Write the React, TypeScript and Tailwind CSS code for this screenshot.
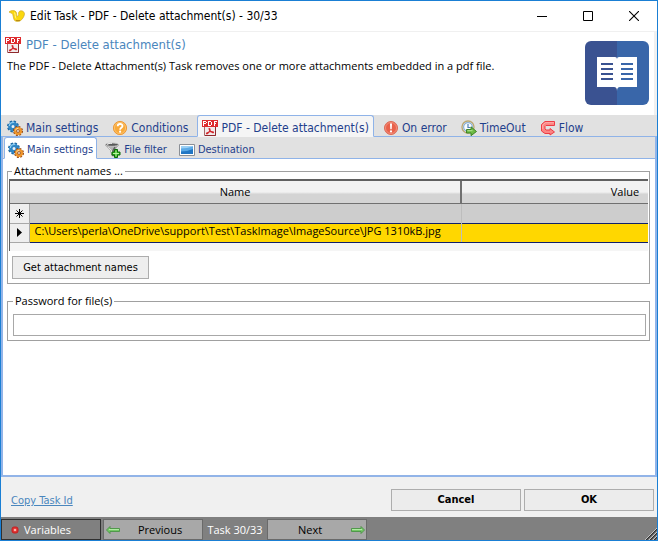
import { useState } from 'react';
import type { ReactNode } from 'react';

interface TabItem {
  id: string;
  label: string;
  icon: ReactNode;
}

function LogoIcon() {
  return (
    <svg width="16" height="12" viewBox="0 0 16 12" className="shrink-0">
      <path
        d="M0 2C2 .3 5.500 0 7 1.800c1 1.500.5 3.500 1 4.700C9.300 6 10 5 9.500 3.500 9.500 2 10.500.8 12 .8c2 0 3 1 3.500 3-.3 3-2 5.500-4.500 7.200-1.500.6-3.500.6-4.800 0C4.300 9.500 4.500 6.500 3.700 4.200 3 2.800 1.500 3 0 2z"
        fill="#fbd80e"
        stroke="#cfa62a"
        strokeWidth=".7"
      />
      <path d="M5.500 2.500c1 2 .5 4.500 1.500 6" fill="none" stroke="#fff48a" />
      <path d="M7 10.500h4" stroke="#b98d12" />
    </svg>
  );
}

function PdfIcon() {
  return (
    <svg width="16" height="16" viewBox="0 0 16 16" className="shrink-0">
      <path d="M2.500 5.500h11v10h-11z" fill="#f1ecec" stroke="#a9686a" />
      <path d="M3 15.500h10.500V7" fill="none" stroke="#8f2a2d" />
      <path
        d="M7.200 8.500c1.300 0 .8 2-.2 3.500S5 14.300 4.500 13.700s1.500-1.500 3.500-1.900 3.800 0 3.500.7-2-.2-3-1.500-2-2.500-1.300-2.500z"
        fill="none"
        stroke="#d3282d"
        strokeWidth="1.100"
      />
      <path d="M0 0h16v7H0z" fill="#de2b2e" />
      <path
        d="M1.500 6V1M2 1.500h2M4.500 2v1M2 3.500h2M6.500 6V1M7 1.500h2M7 5.500h2M9.500 2v3M12.500 6V1M13 1.500h2M13 3.500h1"
        fill="none"
        stroke="#fff"
        shapeRendering="crispEdges"
      />
    </svg>
  );
}

function GearsIcon() {
  return (
    <svg width="16" height="16" viewBox="0 0 16 16" className="shrink-0">
      <circle cx="6" cy="6.500" r="5" fill="none" stroke="#1d659f" strokeWidth="2" strokeDasharray="2.300 1.627" />
      <circle cx="6" cy="6.500" r="3.200" fill="#eef3f8" stroke="#2f86c5" strokeWidth="3.400" />
      <path d="M2.300 6a3.800 3.800 0 0 1 5-3.500" fill="none" stroke="#8ccbf0" strokeWidth="1.300" />
      <circle cx="11" cy="11" r="4" fill="none" stroke="#93440f" strokeWidth="2" strokeDasharray="1.800 1.340" />
      <circle cx="11" cy="11" r="2.600" fill="#fff" stroke="#ee952b" strokeWidth="2.800" />
      <path d="M8.500 10.500a2.700 2.700 0 0 1 3-2.200" fill="none" stroke="#ffd894" />
      <circle cx="11" cy="11" r="1.400" fill="#fff" stroke="#8e4312" strokeWidth=".8" />
    </svg>
  );
}

function QuestionIcon() {
  return (
    <svg width="16" height="16" viewBox="0 0 16 16" className="shrink-0">
      <circle cx="8" cy="8" r="6.600" fill="#f8a93a" stroke="#ee9a38" />
      <circle cx="8" cy="8" r="5.600" fill="none" stroke="#fbc878" strokeWidth=".8" />
      <path d="M5.700 6.300C5.700 3.300 10.500 3.300 10.500 6c0 1.900-2.400 1.700-2.400 3.700" fill="none" stroke="#fff" strokeWidth="1.800" />
      <circle cx="8.100" cy="11.700" r="1.100" fill="#fff" />
    </svg>
  );
}

function ErrorIcon() {
  return (
    <svg width="16" height="16" viewBox="0 0 16 16" className="shrink-0">
      <circle cx="8" cy="8" r="6.500" fill="#e9614b" stroke="#dd6a56" />
      <circle cx="8" cy="8" r="5.500" fill="none" stroke="#f39a86" strokeWidth=".8" />
      <path d="M7 3.500h2L8.700 9.200H7.300z" fill="#fff" />
      <circle cx="8" cy="11.400" r="1.100" fill="#fff" />
    </svg>
  );
}

function TimeOutIcon() {
  return (
    <svg width="16" height="16" viewBox="0 0 16 16" className="shrink-0">
      <circle cx="7" cy="7" r="6" fill="#eef3f8" stroke="#bba873" strokeWidth="1.400" />
      <circle cx="7" cy="7" r="4.400" fill="#f7fbff" stroke="#88aed4" strokeWidth="1.200" />
      <path d="M7 4v3.500h2.500" fill="none" stroke="#4f7fb3" strokeWidth="1.200" />
      <path d="M5.500 9.500h4.500V6.800l5.500 4.700-5.500 4.200v-2.700H5.500z" fill="#6dbb45" stroke="#347d1d" strokeWidth=".9" />
      <path d="M6.500 10.700h5" stroke="#b4e58f" />
    </svg>
  );
}

function FlowIcon() {
  return (
    <svg width="16" height="16" viewBox="0 0 16 16" className="shrink-0">
      <path
        d="M14.500 1.500H5L1.500 4.500v6.500L5 13.500h5V15l4.500-3-4.500-3.500V10H6L5 9V6.500L6 5.500h8.500z"
        fill="#fb8583"
        stroke="#ee3b44"
        strokeLinejoin="round"
      />
      <path d="M14 2.700H5.500L2.700 5v4" fill="none" stroke="#ffb9b4" strokeWidth=".8" />
    </svg>
  );
}

function FilterIcon() {
  return (
    <svg width="16" height="16" viewBox="0 0 16 16" className="shrink-0">
      <path d="M.5 3l5 5.500 1.500 5.500h2V8.500l4.500-5.500z" fill="#b4b4b4" stroke="#8a8a8a" strokeWidth=".6" />
      <path d="M10 5L8 8.500V14" fill="none" stroke="#5c5c5c" strokeWidth="1.400" />
      <path d="M3 5.200l3.500 3.500L7.500 13" fill="none" stroke="#efefef" />
      <ellipse cx="7" cy="2.600" rx="6.500" ry="1.700" fill="#595959" stroke="#c9c9c9" strokeWidth=".9" />
      <path d="M2 2.600c1-1 3-1.300 5-1.300" fill="none" stroke="#f4f4f4" />
      <path d="M9.500 7.500h3v2.500H15v3h-2.500v2.500h-3V13H7v-3h2.500z" fill="#32b51f" stroke="#0b6b08" />
      <path d="M11 8.500v6M8 11.500h6" stroke="#b8f2a0" />
    </svg>
  );
}

function DestinationIcon() {
  return (
    <svg width="16" height="16" viewBox="0 0 16 16" className="shrink-0">
      <path d="M.5 2.500h15v11H.5z" fill="#fff" stroke="#8a8f96" />
      <path d="M2 4h12v8H2z" fill="#2176c4" />
      <path d="M2 9.500Q8 9.500 14 7V4H2z" fill="#5aa9e6" />
      <path d="M2 6.500Q8 6.500 14 4.500V4H2z" fill="#9bd0f5" />
    </svg>
  );
}

function BookIcon() {
  return (
    <svg width="64" height="64" viewBox="0 0 64 64" className="shrink-0">
      <path d="M6 0h26v64H6a6 6 0 0 1-6-6V6a6 6 0 0 1 6-6z" fill="#3a5291" />
      <path d="M32 0h26a6 6 0 0 1 6 6v52a6 6 0 0 1-6 6H32z" fill="#3966a9" />
      <path d="M12 16h18q2 0 2 2 0-2 2-2h18v30H35q-3 0-3 4 0-4-3-4H12z" fill="#fff" />
      <path d="M16 23h12M16 28h12M16 33h12M16 38h12" stroke="#3a5291" strokeWidth="2" />
      <path d="M36 23h12M36 28h12M36 33h12M36 38h12" stroke="#3966a9" strokeWidth="2" />
    </svg>
  );
}

function ArrowIcon({ flipped = false }: { flipped?: boolean }) {
  return (
    <svg width="14" height="8" viewBox="0 0 14 8" className={flipped ? 'shrink-0 -scale-x-100' : 'shrink-0'}>
      <path d="M.5 2.500h9.500v-2l3.500 3.500-3.500 3.500v-2H.5z" fill="#74c766" stroke="#4b9445" strokeWidth=".9" />
      <path d="M1 3.500h10" stroke="#b7efa9" strokeWidth=".9" />
    </svg>
  );
}

const mainTabs: TabItem[] = [
  { id: 'main', label: 'Main settings', icon: <GearsIcon /> },
  { id: 'conditions', label: 'Conditions', icon: <QuestionIcon /> },
  { id: 'task', label: 'PDF - Delete attachment(s)', icon: <PdfIcon /> },
  { id: 'error', label: 'On error', icon: <ErrorIcon /> },
  { id: 'timeout', label: 'TimeOut', icon: <TimeOutIcon /> },
  { id: 'flow', label: 'Flow', icon: <FlowIcon /> },
];

const subTabs: TabItem[] = [
  { id: 'settings', label: 'Main settings', icon: <GearsIcon /> },
  { id: 'filter', label: 'File filter', icon: <FilterIcon /> },
  { id: 'destination', label: 'Destination', icon: <DestinationIcon /> },
];

function TitleBar() {
  return (
    <header className="flex h-[31px] items-center border-b border-[#f0f0f0] pl-2">
      <LogoIcon />
      <h1 className="ml-[5px] flex-1 font-['DejaVu_Sans_Condensed','Noto_Sans',sans-serif] text-[12px]">
        Edit Task - PDF - Delete attachment(s) - 30/33
      </h1>
      <button aria-label="Minimize" className="flex h-full w-[46px] items-center justify-center">
        <svg width="10" height="10" viewBox="0 0 10 10">
          <path d="M0 5.500h10" stroke="#000" />
        </svg>
      </button>
      <button aria-label="Maximize" className="flex h-full w-[46px] items-center justify-center">
        <svg width="10" height="10" viewBox="0 0 10 10">
          <path d="M.5.5h9v9h-9z" fill="none" stroke="#000" />
        </svg>
      </button>
      <button aria-label="Close" className="flex h-full w-[46px] items-center justify-center">
        <svg width="10" height="10" viewBox="0 0 10 10">
          <path d="M0 0l10 10M10 0L0 10" stroke="#000" strokeWidth="1.100" />
        </svg>
      </button>
    </header>
  );
}

function MainTabs({ active, onChange }: { active: string; onChange: (id: string) => void }) {
  return (
    <div
      role="tablist"
      className="flex h-[22px] gap-1 border-b border-[#8fb3e8] bg-[#e1e1e1] pl-px font-['DejaVu_Sans_Condensed','Noto_Sans',sans-serif] text-[12px] text-[#1f3f8c]"
    >
      {mainTabs.map((tab) => (
        <button
          key={tab.id}
          role="tab"
          aria-selected={tab.id === active}
          onClick={() => onChange(tab.id)}
          className={`flex h-[22px] items-center gap-[3px] whitespace-nowrap rounded-t-[3px] border px-1 pt-[3px] ${
            tab.id === active ? 'border-[#8fb3e8] border-b-[#f5f5f5] bg-[#f5f5f5]' : 'border-transparent'
          }`}
        >
          {tab.icon}
          <span>{tab.label}</span>
        </button>
      ))}
    </div>
  );
}

function SubTabs({ active, onChange }: { active: string; onChange: (id: string) => void }) {
  return (
    <div
      role="tablist"
      className="flex h-[22px] gap-1 border-b border-[#8fb3e8] bg-[#e1e1e1] pl-px font-['DejaVu_Sans_Condensed','Noto_Sans',sans-serif] text-[11px] text-[#1f3f8c]"
    >
      {subTabs.map((tab) => (
        <button
          key={tab.id}
          role="tab"
          aria-selected={tab.id === active}
          onClick={() => onChange(tab.id)}
          className={`flex h-[22px] items-center gap-[3px] whitespace-nowrap rounded-t-[3px] border px-[3px] pt-[3px] ${
            tab.id === active ? 'border-[#8fb3e8] border-b-white bg-white' : 'border-transparent'
          }`}
        >
          {tab.icon}
          <span>{tab.label}</span>
        </button>
      ))}
    </div>
  );
}

function AttachmentTable() {
  return (
    <div className="mx-px h-[72px] overflow-hidden border-t-2 border-l border-[#606060] bg-[#f5f5f5]">
      <table className="w-[778px] table-fixed border-collapse">
        <colgroup>
          <col className="w-[19px]" />
          <col className="w-[432px]" />
          <col />
        </colgroup>
        <thead>
          <tr className="h-[22px] bg-linear-to-b from-[#f2f2f2] from-50% to-[#d4d4d4] to-60%">
            <th colSpan={2} className="border-r-2 border-b border-[#707070] font-normal">Name</th>
            <th className="border-b border-[#707070] font-normal">Value</th>
          </tr>
        </thead>
        <tbody>
          <tr className="h-[20px] bg-[#cdcdcd]">
            <td className="border-r border-b border-[#a8a8a8] bg-[#eeeeee]">
              <svg width="9" height="9" viewBox="0 0 9 9" className="mx-auto">
                <path d="M4.500 0v9M0 4.500h9M1.500 1.500l6 6M7.500 1.500l-6 6" stroke="#000" />
              </svg>
            </td>
            <td className="border-r border-[#bdbdbd]" />
            <td />
          </tr>
          <tr className="h-[19px] bg-[#ffd700]">
            <td className="border-r border-b border-[#a8a8a8] bg-[#eeeeee]">
              <svg width="5" height="9" viewBox="0 0 5 9" className="mx-auto">
                <path d="M0 0l5 4.500L0 9z" fill="#000" />
              </svg>
            </td>
            <td className="truncate border border-[#10206a] border-r-[#bdbdbd] pl-[5px] align-top leading-[14px]">
              C:\Users\perla\OneDrive\support\Test\TaskImage\ImageSource\JPG 1310kB.jpg
            </td>
            <td className="border-y border-[#10206a]" />
          </tr>
        </tbody>
      </table>
    </div>
  );
}

export default function App() {
  const [mainTab, setMainTab] = useState('task');
  const [subTab, setSubTab] = useState('settings');
  const [password, setPassword] = useState('');

  return (
    <div className="flex min-h-screen flex-col border border-[#1a7fd4] bg-white font-['Open_Sans','Noto_Sans',sans-serif] text-[11px] leading-4 text-black">
      <TitleBar />

      <section className="flex h-[83px] justify-between border-r-[3px] border-[#f0f0f0] pr-[5px]">
        <div className="pt-[5px] pl-1">
          <h2 className="flex items-center gap-[5px] font-['DejaVu_Sans_Condensed','Noto_Sans',sans-serif] text-[13px] text-[#4a86bd]">
            <PdfIcon />
            PDF - Delete attachment(s)
          </h2>
          <p className="mt-[5px] pl-[2px]">
            The PDF - Delete Attachment(s) Task removes one or more attachments embedded in a pdf file.
          </p>
        </div>
        <div className="pt-[9px]">
          <BookIcon />
        </div>
      </section>

      <MainTabs active={mainTab} onChange={setMainTab} />

      <main className="flex-1 border-x-2 border-b-2 border-[#92b4e8]">
        <SubTabs active={subTab} onChange={setSubTab} />

        <div className="pt-1 pr-[5px] pl-1">
          <fieldset className="min-w-0 border border-[#a0a0a0] pb-1">
            <legend className="ml-1 px-[2px]">Attachment names ...</legend>
            <AttachmentTable />
            <button className="mt-[5px] ml-1 h-[23px] w-[137px] border border-[#adadad] bg-[#eeeeee] font-['DejaVu_Sans_Condensed','Noto_Sans',sans-serif]">
              Get attachment names
            </button>
          </fieldset>

          <fieldset className="mt-[9px] min-w-0 border border-[#a0a0a0] pr-[3px] pb-1 pl-[5px]">
            <legend className="px-[2px]">
              <label htmlFor="password">Password for file(s)</label>
            </legend>
            <input
              id="password"
              type="password"
              value={password}
              onChange={(e) => setPassword(e.target.value)}
              className="mt-[5px] block h-[22px] w-full border border-[#a8a8a8] px-1"
            />
          </fieldset>
        </div>
      </main>

      <footer className="flex h-[40px] items-center justify-between bg-[#f0f0f0] pr-[3px] pl-[10px]">
        <a href="#" className="mt-2 font-['DejaVu_Sans_Condensed','Noto_Sans',sans-serif] text-[11px] text-[#4a86bd] underline">
          Copy Task Id
        </a>
        <div className="mt-[6px] flex gap-[3px] font-['DejaVu_Sans_Condensed','Noto_Sans',sans-serif] text-[11px] font-bold">
          <button className="h-[22px] w-[130px] border border-[#adadad] bg-[#ececec]">Cancel</button>
          <button className="h-[22px] w-[130px] border border-[#adadad] bg-[#ececec]">OK</button>
        </div>
      </footer>

      <div className="flex h-[23px] items-end bg-[#808080]">
        <button className="flex h-[21px] w-[100px] items-center border border-[#303030] pl-[9px] text-white">
          <svg width="8" height="8" viewBox="0 0 8 8">
            <rect x="1" y="1" width="6" height="6" rx="2" fill="#e03030" stroke="#c42020" />
            <circle cx="4" cy="4" r="1.300" fill="#ffb0a8" />
          </svg>
          <span className="ml-[5px]">Variables</span>
        </button>
        <button className="ml-[2px] flex h-[21px] w-[100px] items-center border border-[#6a6a6a] bg-[#a8a8a8] pl-[2px]">
          <ArrowIcon flipped />
          <span className="flex-1 pl-[18px] text-left">Previous</span>
        </button>
        <span className="w-[64px] pb-[2px] text-center text-white">Task 30/33</span>
        <button className="flex h-[21px] w-[100px] items-center border border-[#6a6a6a] bg-[#a8a8a8] pr-px">
          <span className="flex-1 pl-[30px] text-left">Next</span>
          <ArrowIcon />
        </button>
        <svg width="12" height="12" viewBox="0 0 12 12" className="ml-auto">
          <path d="M1 12L12 1M5 12l7-7M9 12l3-3" stroke="#303030" strokeWidth="1.500" />
          <path d="M0 12L12 0M4 12l8-8M8 12l4-4" stroke="#e0e0e0" strokeWidth=".8" />
        </svg>
      </div>
    </div>
  );
}
